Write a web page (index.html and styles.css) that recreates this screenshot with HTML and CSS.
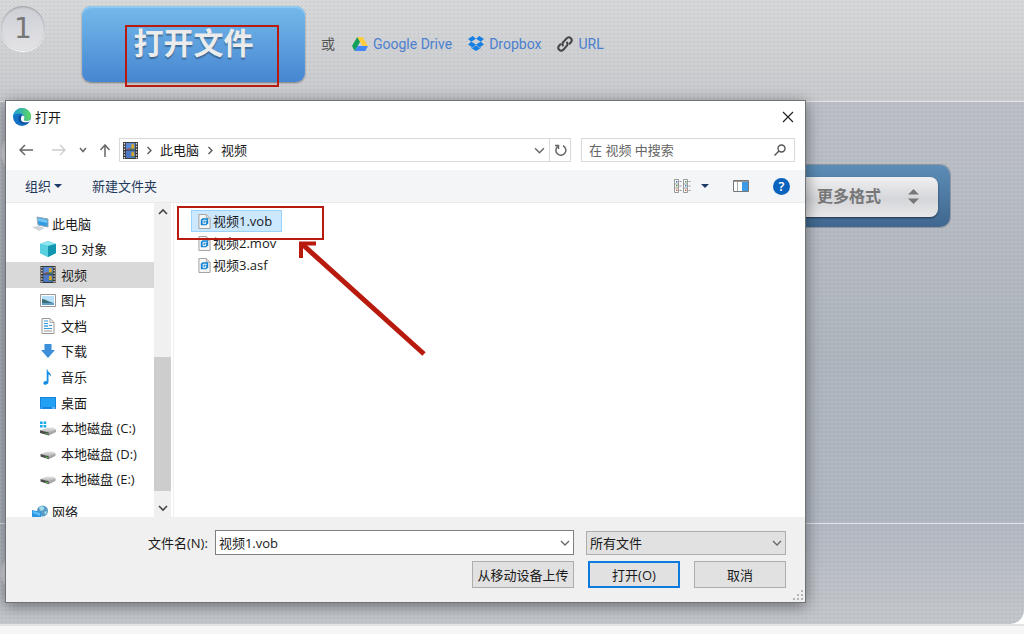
FILE: index.html
```html
<!DOCTYPE html>
<html lang="zh-CN">
<head>
<meta charset="utf-8">
<title>打开文件</title>
<link rel="stylesheet" href="styles.css">
</head>
<body>
<svg class="defs" aria-hidden="true">
  <defs>
    <linearGradient id="edge-a" x1="0" y1="0" x2="1" y2="0"><stop offset="0" stop-color="#1b9de0"/><stop offset="1" stop-color="#5fd95a"/></linearGradient>
    <linearGradient id="disk-a" x1="0" y1="0" x2="0" y2="1"><stop offset="0" stop-color="#e6e6e6"/><stop offset="1" stop-color="#a9a9a9"/></linearGradient>
    <symbol id="film" viewBox="0 0 16 18">
      <rect width="16" height="18" fill="#34322f"/>
      <rect x="3" y="1" width="10" height="7" fill="#5a8ad4"/><rect x="3" y="9" width="10" height="8" fill="#4d78c6"/>
      <path d="M9 2h2l1 2v3H9zM9 11l2-1 1 2v3H9z" fill="#d8a928"/>
      <path d="M3 8l4-1.500 3 1.500z" fill="#c7432f"/><path d="M7 7h6v1H7zM9 15h4v1H9z" fill="#3a7a39"/>
      <path d="M1.500 1v17M14.500 1v17" stroke="#ddd" stroke-width="1.400" stroke-dasharray="1.500 1.500"/>
    </symbol>
    <symbol id="disk" viewBox="0 0 18 16">
      <path d="M0 8l8-3h7l3 2-8 4z" fill="url(#disk-a)"/>
      <path d="M0 8l10 2.500V14L0 11z" fill="#4a4d4a"/><path d="M10 10.500L18 7v3l-8 4z" fill="#a6a6a6"/>
      <path d="M6 11l3 .8v1L6 12z" fill="#5fce50"/>
    </symbol>
    <symbol id="clip" viewBox="0 0 14 16">
      <path d="M1 .5h8l4 4v11H1z" fill="#f8f8f8" stroke="#9a9a9a"/><path d="M9 .5v4h4" fill="#ddd" stroke="#aaa"/>
      <path d="M3 6l2-1.500h6V10l-2 2H3z" fill="#1484d2"/>
      <path d="M9.500 6.700h-4v3.600h2.800V8.500H7" fill="none" stroke="#fff"/>
    </symbol>
    <symbol id="chev-r" viewBox="0 0 8 8"><path d="M2.500 .5L6 4 2.500 7.500" fill="none" stroke="#555" stroke-width="1.300"/></symbol>
    <symbol id="chev-d" viewBox="0 0 10 8"><path d="M1 2l4 4 4-4" fill="none" stroke="#666" stroke-width="1.300"/></symbol>
  </defs>
</svg>

<main class="steps">
  <section class="step step-open">
    <span class="badge">1</span>
    <button class="open-file" type="button">打开文件</button>
    <span class="or">或</span>
    <a class="source" href="#drive">
      <svg width="16" height="14" viewBox="0 0 16 14"><path d="M5.300 0L0 9l2.700 5 5.400-9.200z" fill="#109e58"/><path d="M5.300 0h5.400L16 9h-5.400z" fill="#ffcd40"/><path d="M5.400 9H16l-2.700 5H2.700z" fill="#4285f4"/></svg>
      Google Drive</a>
    <a class="source" href="#dropbox">
      <svg width="16" height="15" viewBox="0 0 16 15"><path d="M4.700 0L8 2.700 3.300 5.700 0 3zM11.300 0L16 3l-3.300 2.700L8 2.700zM0 8.500l3.300-2.800L8 8.600l-3.300 2.800zM16 8.500l-3.300-2.800L8 8.600l3.300 2.800zM8 9.300l3.300 2.700 1.500-.9v1L8 15l-4.800-2.900v-1l1.500.9z" fill="#157fe5"/></svg>
      Dropbox</a>
    <a class="source" href="#url">
      <svg width="16" height="16" viewBox="0 0 16 16" fill="none" stroke="#444" stroke-width="2"><path d="M6.500 10C5 8.500 5.300 7 6.500 5.800L9.500 2.500c3-3 7 1 4.200 4L12 8.200"/><path d="M9.500 6C11 7.500 10.700 9 9.500 10.200L6.500 13.500c-3 3-7-1-4.200-4L4 7.800"/></svg>
      URL</a>
  </section>
  <section class="step step-format">
    <span class="badge">2</span>
    <div class="formats">
      <button class="more" type="button">更多格式
        <svg width="11" height="15" viewBox="0 0 11 15"><path d="M0 5.500L5.500 0 11 5.500zM0 9.500h11L5.500 15z" fill="#777"/></svg>
      </button>
    </div>
  </section>
  <section class="step step-convert"><span class="badge">3</span></section>
</main>
<footer class="page-foot"></footer>

<div class="dialog" role="dialog" aria-labelledby="dlg-title">
  <header class="title">
    <svg width="18" height="18" viewBox="0 0 18 18"><circle cx="9" cy="9" r="9" fill="#1672c4"/><path d="M0 8C1 3 5 0 9 0c5 0 9 4 9 8 0 3-2 5-5 5-2 0-3-1-2.500-2 2-4-2-6-5-5.500C3 6 1 7 0 8z" fill="url(#edge-a)"/><path d="M6 8c-2 4 1 8 5 8 2 0 4-1 5-2.500-2 .8-9 1-8-4 .3-1 .8-1.500 1-2C8 7 6.700 7 6 8z" fill="#0c4f9c"/><path d="M9 7.500c2 0 3 1.500 2 3.500-.6 1 .5 2 2 2 2 0 3.500-.6 4.500-2-.3 1-.8 2-1.500 2.700-3 1.300-9 1-8-3.700.2-1 .5-2 1-2.500z" fill="#fff"/></svg>
    <h1 id="dlg-title">打开</h1>
    <button class="close" type="button" aria-label="关闭"><svg width="12" height="12" viewBox="0 0 12 12"><path d="M1 1l10 10M11 1L1 11" stroke="#222" stroke-width="1.200"/></svg></button>
  </header>

  <div class="address-row">
    <div class="history">
      <button type="button" aria-label="后退"><svg width="14" height="12" viewBox="0 0 14 12" fill="none" stroke="#666" stroke-width="1.500"><path d="M14 6H1M6 1L1 6l5 5"/></svg></button>
      <button type="button" aria-label="前进"><svg width="14" height="12" viewBox="0 0 14 12" fill="none" stroke="#ccc" stroke-width="1.300"><path d="M0 6h13M8 1l5 5-5 5"/></svg></button>
      <button class="recent" type="button" aria-label="最近位置"><svg width="8" height="8" viewBox="0 0 8 8" fill="none" stroke="#666" stroke-width="1.500"><path d="M1 2l3 3.500L7 2"/></svg></button>
      <button type="button" aria-label="上移"><svg width="12" height="13" viewBox="0 0 12 13" fill="none" stroke="#666" stroke-width="1.500"><path d="M6 13V1M1.500 6L6 1l4.500 5"/></svg></button>
    </div>
    <div class="address">
      <svg class="film" width="15" height="17"><use href="#film"/></svg>
      <svg width="8" height="9"><use href="#chev-r"/></svg>
      <button type="button">此电脑</button>
      <svg width="8" height="9"><use href="#chev-r"/></svg>
      <button type="button">视频</button>
      <button class="drop" type="button" aria-label="以前的位置"><svg width="11" height="9"><use href="#chev-d"/></svg></button>
      <button class="refresh" type="button" aria-label="刷新"><svg width="13" height="14" viewBox="0 0 13 14" fill="none" stroke="#666" stroke-width="1.500"><path d="M3.500 3.500a5 5 0 1 0 5.500-.8M1 2.500h3.500V6"/></svg></button>
    </div>
    <div class="search">
      <input type="search" placeholder="在 视频 中搜索" aria-label="在 视频 中搜索">
      <svg width="12" height="12" viewBox="0 0 12 12" fill="none" stroke="#555" stroke-width="1.400"><circle cx="7.500" cy="4.500" r="3.500"/><path d="M5 7L.5 11.500"/></svg>
    </div>
  </div>

  <div class="toolbar">
    <button type="button">组织 <svg width="8" height="4" viewBox="0 0 8 4"><path d="M0 0h8L4 4z" fill="#1e3a66"/></svg></button>
    <button type="button">新建文件夹</button>
    <button class="view" type="button" aria-label="更改视图">
      <svg width="17" height="14" viewBox="0 0 17 14"><path d="M.5.5h4v13h-4zM.5 5h4M.5 9h4M9.500.5h4v13h-4zM9.500 5h4M9.500 9h4" fill="#fff" stroke="#999"/><path d="M5.500 2.500h2M5.500 7h2M5.500 11.500h2M14.500 2.500h2M14.500 7h2M14.500 11.500h2" stroke="#999"/><path d="M2 2h1.500v1.500H2zM11 6h1.500v1.500H11z" fill="#3c82c8"/><path d="M2 6h1.500v1.500H2zM11 2h1.500v1.500H11z" fill="#4c9c50"/><path d="M2 10.500h1.500V12H2zM11 10.500h1.500V12H11z" fill="#d8623d"/></svg>
      <svg width="8" height="4" viewBox="0 0 8 4"><path d="M0 0h8L4 4z" fill="#1e3a66"/></svg>
    </button>
    <button type="button" aria-label="预览窗格"><svg width="16" height="12" viewBox="0 0 16 12"><path d="M.5.5h15v11H.5z" fill="#fff" stroke="#777"/><path d="M1 1.500h14" stroke="#999"/><path d="M4.500 2v9" stroke="#aaa"/><path d="M9 2h6v9H9z" fill="#3d9ce8"/></svg></button>
    <button class="help" type="button" aria-label="帮助">?</button>
  </div>

  <div class="panes">
    <nav class="tree">
      <ul>
        <li class="root"><a href="#pc"><svg width="17" height="15" viewBox="0 0 17 15"><path d="M5 1l11 2v8L6 9z" fill="#2f9de4" stroke="#9aa7b0"/><path d="M6 2l9 2v3L6 5z" fill="#73c6f7"/><path d="M0 11l6-1 7 2-6 3z" fill="#cfd5d9"/></svg>此电脑</a></li>
        <li><a href="#3d"><svg width="16" height="16" viewBox="0 0 16 16"><path d="M8 0l8 3v9l-8 4-8-4V3z" fill="#27b4cb"/><path d="M0 3l8-3 8 3-8 2z" fill="#8be6ee"/><path d="M0 3l8 2v11l-8-4z" fill="#57d1df"/><path d="M8 5l8-2v9l-8 4z" fill="#1296b0"/></svg>3D 对象</a></li>
        <li><a class="current" href="#videos"><svg width="16" height="17"><use href="#film"/></svg>视频</a></li>
        <li><a href="#pictures"><svg width="16" height="13" viewBox="0 0 16 13"><path d="M.5.5h15v12H.5z" fill="#fff" stroke="#999"/><path d="M2 2h12v9H2z" fill="#b9e0fa"/><path d="M2 5c4 0 6 3 12 4v2H2z" fill="#3b6f74"/><path d="M2 9h12v2H2z" fill="#5f9fc8"/></svg>图片</a></li>
        <li><a href="#documents"><svg width="16" height="16" viewBox="0 0 16 16"><path d="M2 .5h8l4 4v11H2z" fill="#fbfbfb" stroke="#999"/><path d="M10 .5v4h4" fill="none" stroke="#aaa"/><path d="M4 3h4M4 5.500h4M9 7.500h3M4 10.500h8" stroke="#349bdf"/><path d="M4 7h4v2H4z" fill="#6cb8ec"/><path d="M4 13h8" stroke="#999"/></svg>文档</a></li>
        <li><a href="#downloads"><svg width="16" height="14" viewBox="0 0 16 14"><path d="M4.500 0h7v6H15l-7 8-7-8h3.500z" fill="#3b8fdb"/></svg>下载</a></li>
        <li><a href="#music"><svg width="16" height="16" viewBox="0 0 16 16"><path d="M7.200 0c.5 3.500 4.500 4 3.800 8-.5-2-2-2.500-2.500-2.500V13c0 2-2 3-3.700 2.700C2.500 15.300 3 12.500 5.500 12c.6-.1 1 0 1.200.2V0z" fill="#168ee6"/></svg>音乐</a></li>
        <li><a href="#desktop"><svg width="16" height="12" viewBox="0 0 16 12"><path d="M0 0h16v12H0z" fill="#1683dc"/><path d="M1 1h14v9H1z" fill="#22a0f3"/><path d="M1 11h1M12 11h3" stroke="#bde2ff"/></svg>桌面</a></li>
        <li><a href="#c"><svg width="16" height="15" viewBox="0 0 18 16"><use href="#disk" y="2" width="18" height="16"/><path d="M0 0h3v3H0zM4 0h3v3H4zM0 4h3v3H0zM4 4h3v3H4z" fill="#18a8ee"/></svg>本地磁盘 (C:)</a></li>
        <li><a href="#d"><svg width="16" height="12" viewBox="0 1 18 14"><use href="#disk" width="18" height="16"/></svg>本地磁盘 (D:)</a></li>
        <li><a href="#e"><svg width="16" height="12" viewBox="0 1 18 14"><use href="#disk" width="18" height="16"/></svg>本地磁盘 (E:)</a></li>
      </ul>
      <a class="network" href="#network"><svg width="17" height="15" viewBox="0 0 17 15"><circle cx="10.500" cy="6" r="5.500" fill="#5a9cc4"/><path d="M7 2c3-2 6 0 5 2S9 6 8 5zM12 7l3-1-1 4z" fill="#a5dcec"/><path d="M0 5l9 2v8l-9-3z" fill="#2996e3"/><path d="M1 6l7 2v3L1 8z" fill="#62bef6"/></svg>网络</a>
    </nav>
    <div class="scrollbar" aria-hidden="true">
      <svg width="10" height="8" viewBox="0 0 10 8"><path d="M1 6l4-4 4 4" fill="none" stroke="#444" stroke-width="1.600"/></svg>
      <div class="track"><div class="thumb"></div></div>
      <svg width="10" height="8" viewBox="0 0 10 8"><path d="M1 2l4 4 4-4" fill="none" stroke="#444" stroke-width="1.600"/></svg>
    </div>
    <ul class="files">
      <li><a class="selected" href="#f1"><svg width="13" height="15"><use href="#clip"/></svg>视频1.vob</a></li>
      <li><a href="#f2"><svg width="13" height="15"><use href="#clip"/></svg>视频2.mov</a></li>
      <li><a href="#f3"><svg width="13" height="15"><use href="#clip"/></svg>视频3.asf</a></li>
    </ul>
  </div>

  <form class="actions">
    <div class="name-row">
      <label for="fname">文件名(N):</label>
      <div class="combo">
        <input id="fname" type="text" value="视频1.vob">
        <svg width="10" height="8"><use href="#chev-d"/></svg>
      </div>
      <div class="combo type">
        <select aria-label="文件类型"><option>所有文件</option></select>
        <svg width="10" height="8"><use href="#chev-d"/></svg>
      </div>
    </div>
    <div class="button-row">
      <button class="upload" type="button">从移动设备上传</button>
      <button class="primary" type="button">打开(O)</button>
      <button type="button">取消</button>
    </div>
  </form>
  <svg class="grip" width="10" height="10" viewBox="0 0 10 10" fill="#b5b5b5"><path d="M8 0h2v2H8zM4 4h2v2H4zM8 4h2v2H8zM0 8h2v2H0zM4 8h2v2H4zM8 8h2v2H8z"/></svg>
</div>

<svg class="marks" width="440" height="370" viewBox="0 0 440 370" fill="none" stroke="#b91a0e" aria-hidden="true">
  <rect x="126" y="26" width="152" height="60" stroke-width="2"/>
  <rect x="178" y="207" width="145" height="32" stroke-width="2"/>
  <path d="M424 354L302 244" stroke-width="5"/>
  <path d="M301 258V243.500H316" stroke-width="4"/>
</svg>
</body>
</html>
```
FILE: styles.css
```css
* { box-sizing: border-box; }

body {
  position: relative;
  display: flex;
  flex-direction: column;
  min-height: 100vh;
  margin: 0;
  background: #fff;
  color: #1a1a1a;
  font: 13px/20px "Open Sans", "Noto Sans CJK SC", sans-serif;
  overflow: hidden;
}

button, input, select { font: inherit; color: inherit; }
button { padding: 0; border: 0; background: none; }
a { color: inherit; text-decoration: none; }
ul { margin: 0; padding: 0; list-style: none; }
svg { display: block; flex: none; }
.defs { position: absolute; width: 0; height: 0; }

/* Page behind the dialog */
.steps {
  flex: 1;
  display: grid;
  grid-template-rows: 101px 1fr 101px;
  border-radius: 0 0 14px 0;
  overflow: hidden;
}
.step {
  display: flex;
  align-items: flex-start;
  background-image: radial-gradient(#0000000a 1px, #0000 1px), var(--tone);
  background-size: 4px 4px, auto;
}
.step + .step { border-top: 1px solid #e3e4e7; }
.step-open { --tone: linear-gradient(#d7d8da, #c9cacd); padding: 6px 0 0 1px; }
.step-format { --tone: linear-gradient(#bcbfc7, #b9bdc5 20%, #afb6be 60%, #b1b8c1); padding: 26px 74px 0 1px; }
.step-convert { --tone: linear-gradient(#b3b9c3, #c4c7cb); padding: 24px 0 0 1px; }

.badge {
  flex: none;
  width: 44px;
  height: 45px;
  border-radius: 50%;
  background: linear-gradient(#ccced5, #e4e4e6);
  box-shadow: inset 0 1px 2px #00000040, 0 1px 1px #fff;
  color: #777;
  font: 28px/45px "DejaVu Sans", sans-serif;
  text-align: center;
}
.open-file {
  width: 223px;
  height: 76px;
  margin: 0 16px 0 37px;
  padding-bottom: 2px;
  border-radius: 9px;
  background: linear-gradient(#74b9eb, #4786d1);
  box-shadow: inset 0 2px 1px #8fcbf3, 0 1px 2px #00000066;
  color: #ececec;
  font-size: 30px;
  font-weight: 700;
  text-shadow: 0 2px 1px #0000004d;
}
.or, .source {
  display: flex;
  align-items: center;
  height: 75px;
  font-family: Roboto, "Noto Sans CJK SC", sans-serif;
  font-size: 14px;
}
.or { margin-right: 17px; color: #555; }
.source { gap: 5px; margin-right: 16px; color: #4b80cf; }

.formats {
  flex: 1;
  display: flex;
  justify-content: flex-end;
  height: 62px;
  margin: 37px 0 0 37px;
  padding: 12px;
  border-radius: 10px;
  background: linear-gradient(#5c8db6, #40678f);
  box-shadow: 0 0 0 1px #8f969f;
}
.more {
  display: flex;
  align-items: center;
  gap: 27px;
  height: 40px;
  padding: 0 19px 2px 28px;
  border-radius: 8px;
  background: linear-gradient(#f0f0f1, #d5d6da 55%, #e8e8e9);
  box-shadow: 0 1px 2px #22334a;
  color: #777;
  font-size: 16px;
  font-weight: 700;
}
.page-foot { height: 10px; border-top: 2px solid #e3e3e4; background: #f5f5f5; }

/* Dialog window */
.dialog {
  position: absolute;
  inset: 100px 218px 31px 5px;
  display: flex;
  flex-direction: column;
  border: 1px solid #6f7276;
  background: #fff;
  box-shadow: 0 3px 14px #00000073;
}
.title { display: flex; align-items: center; gap: 4px; height: 31px; padding: 0 11px 0 7px; }
.title h1 { flex: 1; margin: 0; font-size: 13px; font-weight: 400; }

.address-row { display: flex; gap: 10px; height: 38px; padding: 6px 10px 8px 13px; }
.history { display: flex; align-items: center; gap: 19px; }
.history button:nth-child(n + 3) { margin-left: -6px; }
.history .recent { margin-right: -1px; }
.address, .search { display: flex; align-items: center; border: 1px solid #d9d9d9; }
.address { flex: 1; gap: 7px; margin-left: -2px; padding-left: 3px; }
.address .drop { margin-left: auto; }
.address .refresh {
  display: flex;
  align-items: center;
  justify-content: center;
  align-self: stretch;
  width: 21px;
  margin-left: -3px;
  border-left: 1px solid #d9d9d9;
}
.search { width: 214px; padding: 0 8px 0 7px; }
.search input { flex: 1; min-width: 0; padding: 0; border: 0; outline: 0; background: none; }
.search input::placeholder { color: #666; opacity: 1; }

.toolbar {
  display: flex;
  align-items: center;
  gap: 24px;
  height: 33px;
  padding: 0 15px 0 19px;
  border-bottom: 1px solid #e9eaeb;
  background: #f4f5f7;
  color: #1e395b;
}
.toolbar button { display: flex; align-items: center; gap: 3px; }
.toolbar button:first-child { margin-right: 6px; }
.toolbar .view { gap: 10px; margin-left: auto; }
.toolbar .help {
  justify-content: center;
  width: 17px;
  height: 17px;
  border-radius: 50%;
  background: #0b63bd;
  color: #fff;
  font-weight: 600;
}

.panes { flex: 1; display: flex; min-height: 0; }
.tree { width: 148px; padding-top: 8px; overflow: hidden; }
.tree ul { display: grid; grid-auto-rows: 1fr; height: 281px; }
.tree a { display: flex; align-items: center; gap: 5px; height: 100%; padding-left: 34px; }
.tree .root a, .tree .network { gap: 3px; padding-left: 26px; }
.tree .network { height: 26px; margin-top: 7px; }
.tree .current { background: #d9d9d9; }
.scrollbar {
  display: flex;
  flex-direction: column;
  align-items: center;
  gap: 13px;
  width: 17px;
  padding: 5px 0;
  background: #f0f0f0;
}
.track { flex: 1; display: flex; flex-direction: column; justify-content: flex-end; width: 17px; }
.thumb { height: 51%; background: #cdcdcd; }
.files { flex: 1; margin-left: 2px; padding: 7px 0 0 17px; border-left: 1px solid #f0f0f0; }
.files li { display: flex; }
.files a { display: flex; align-items: center; gap: 2px; height: 22px; padding: 0 9px 0 6px; border: 1px solid transparent; }
.files .selected { border-color: #99d1ff; background: #cce8ff; }

.actions {
  display: flex;
  flex-direction: column;
  gap: 6px;
  padding: 13px 19px 14px 142px;
  background: #f0f0f0;
}
.name-row { display: flex; align-items: center; }
.combo { display: grid; flex: 1; align-items: center; margin-left: 7px; }
.combo > * { grid-area: 1 / 1; }
.combo svg { justify-self: end; margin-right: 4px; pointer-events: none; }
.combo input, .combo select { width: 100%; height: 25px; padding: 0 3px; border: 1px solid #7f7f7f; border-radius: 0; background: #fff; outline: 0; }
.combo select { height: 24px; border-color: #adadad; background: #e1e1e1; appearance: none; }
.combo.type { flex: none; width: 200px; margin-left: 12px; }
.button-row { display: flex; justify-content: flex-end; gap: 14px; }
.button-row button { width: 92px; height: 27px; border: 1px solid #adadad; background: #e1e1e1; }
.button-row .upload { width: 102px; }
.button-row .primary { border: 2px solid #0f7ade; }
.grip { position: absolute; right: 2px; bottom: 2px; }

/* Red annotation drawn over everything */
.marks { position: absolute; top: 0; left: 0; pointer-events: none; }
```
